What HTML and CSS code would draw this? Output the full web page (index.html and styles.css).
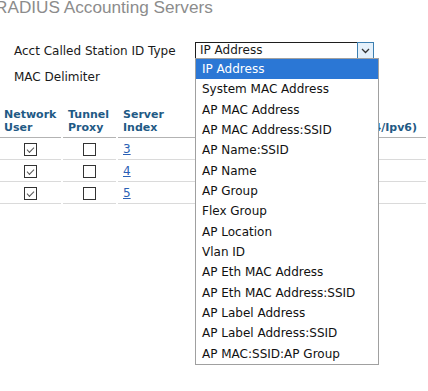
FILE: index.html
```html
<!DOCTYPE html>
<html lang="en">
<head>
  <meta charset="UTF-8">
  <title>RADIUS Accounting Servers</title>
  <link rel="stylesheet" href="styles.css">
</head>
<body>

<h1 class="title">RADIUS Accounting Servers</h1>

<div class="form">
  <div class="form-row">
    <label class="form-label">Acct Called Station ID Type</label>
    <div class="select">
      <span class="select-value">IP Address</span>
      <span class="select-btn">
        <svg width="9" height="6" viewBox="0 0 9 6"><polyline points="1,1 4.5,4.5 8,1" fill="none" stroke="#333" stroke-width="1.3"/></svg>
      </span>
      <ul class="select-list">
        <li class="selected">IP Address</li>
        <li>System MAC Address</li>
        <li>AP MAC Address</li>
        <li>AP MAC Address:SSID</li>
        <li>AP Name:SSID</li>
        <li>AP Name</li>
        <li>AP Group</li>
        <li>Flex Group</li>
        <li>AP Location</li>
        <li>Vlan ID</li>
        <li>AP Eth MAC Address</li>
        <li>AP Eth MAC Address:SSID</li>
        <li>AP Label Address</li>
        <li>AP Label Address:SSID</li>
        <li>AP MAC:SSID:AP Group</li>
      </ul>
    </div>
  </div>
  <div class="form-row">
    <label class="form-label">MAC Delimiter</label>
  </div>
</div>

<table class="servers">
  <colgroup>
    <col style="width: 62px">
    <col style="width: 53px">
    <col style="width: 80px">
    <col>
  </colgroup>
  <thead>
    <tr>
      <th>Network<br>User</th>
      <th>Tunnel<br>Proxy</th>
      <th>Server<br>Index</th>
      <th class="address">Server Address(Ipv4/Ipv6)</th>
    </tr>
  </thead>
  <tbody>
    <tr>
      <td class="center"><span class="checkbox checked"></span></td>
      <td class="center"><span class="checkbox"></span></td>
      <td><a href="#">3</a></td>
      <td></td>
    </tr>
    <tr>
      <td class="center"><span class="checkbox checked"></span></td>
      <td class="center"><span class="checkbox"></span></td>
      <td><a href="#">4</a></td>
      <td></td>
    </tr>
    <tr>
      <td class="center"><span class="checkbox checked"></span></td>
      <td class="center"><span class="checkbox"></span></td>
      <td><a href="#">5</a></td>
      <td></td>
    </tr>
  </tbody>
</table>

</body>
</html>
```

FILE: styles.css
```css
html,
body {
  min-height: 100vh;
}
body {
  margin: 0;
  background: #fff;
  font-family: "DejaVu Sans", Verdana, sans-serif;
  font-size: 12px;
  color: #1a1a1a;
}
.title {
  margin: -2px 0 0 -5px;
  font-family: "Liberation Sans", Arial, sans-serif;
  font-size: 17.2px;
  font-weight: normal;
  line-height: 19px;
  color: #8c8c8c;
  white-space: nowrap;
}
.form {
  margin-top: 25px;
  padding-left: 14px;
  display: flex;
  flex-direction: column;
  gap: 9px;
}
.form-row {
  display: flex;
  align-items: center;
  height: 17px;
}
.form-label {
  width: 181px;
}
.select {
  position: relative;
  display: flex;
  width: 179px;
  height: 17px;
  box-sizing: border-box;
}
.select-value {
  flex: 1;
  border: 1px solid #1e1e1e;
  border-right: none;
  padding-left: 4px;
  line-height: 15px;
}
.select-btn {
  width: 17px;
  box-sizing: border-box;
  border: 1px solid #3c7fb1;
  background: #e5f1fb;
  display: flex;
  align-items: center;
  justify-content: center;
}
.select-list {
  position: absolute;
  z-index: 2;
  top: 16px;
  left: 0;
  width: 184px;
  box-sizing: border-box;
  margin: 0;
  padding: 0;
  list-style: none;
  background: #fff;
  border: 1px solid #a0a0a0;
}
.select-list li {
  height: 20.33px;
  line-height: 21px;
  padding-left: 6px;
  color: #111;
  white-space: nowrap;
}
.select-list li.selected {
  background: #2b77d5;
  color: #fff;
}
.servers {
  margin: 20px 0 0 -3px;
  width: 431px;
  table-layout: fixed;
  border-collapse: separate;
  border-spacing: 2px 0;
}
.servers th {
  text-align: left;
  vertical-align: bottom;
  font-size: 11px;
  font-weight: bold;
  line-height: 13px;
  color: #1f5a85;
  padding: 3px 5px 3px;
  border-bottom: 1px solid #b3b3b3;
  white-space: nowrap;
}
.servers th.address {
  text-align: right;
  padding-right: 9px;
}
.servers td {
  height: 21px;
  padding: 0 5px;
  border-bottom: 1px solid #dadada;
  vertical-align: middle;
}
.servers td.center {
  text-align: center;
}
.servers a {
  color: #2a5fb5;
}
.checkbox {
  display: inline-block;
  width: 13px;
  height: 13px;
  box-sizing: border-box;
  border: 1px solid #333;
  background: #fff;
  vertical-align: middle;
  position: relative;
}
.checkbox.checked::after {
  content: "";
  position: absolute;
  left: 2px;
  top: 1px;
  width: 6px;
  height: 3px;
  border-left: 1.5px solid #555;
  border-bottom: 1.5px solid #555;
  transform: translate(0, 2px) rotate(-45deg);
  transform-origin: center;
}
```
